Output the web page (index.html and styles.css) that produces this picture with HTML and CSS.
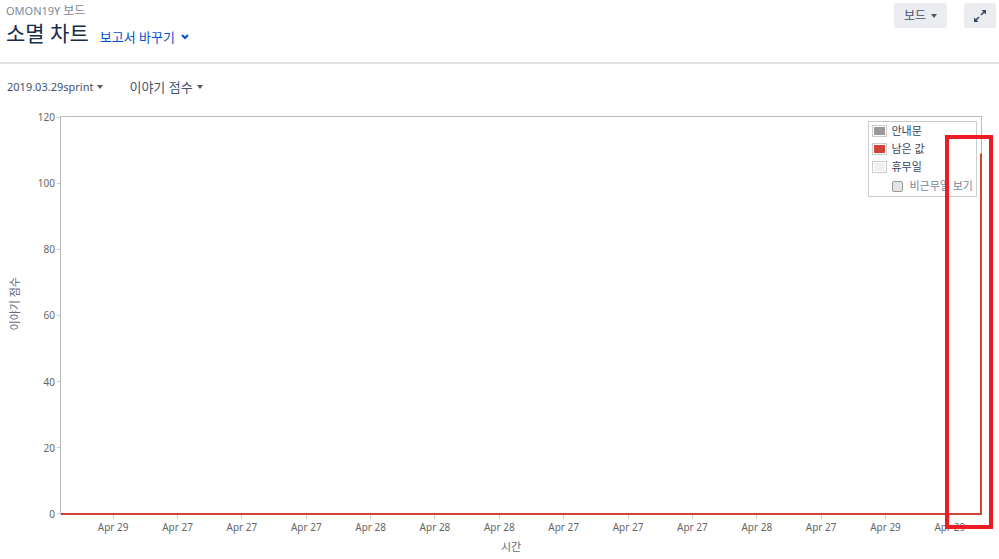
FILE: index.html
```html
<!DOCTYPE html>
<html lang="ko">

<head>
    <meta charset="UTF-8">
    <meta name="viewport" content="width=device-width, initial-scale=1.0">
    <title>소멸 차트</title>
    <link rel="stylesheet" href="styles.css">
</head>

<body>
    <header class="header">
        <div class="heading">
            <div class="boardName">OMON19Y <span class="korean">보드</span></div>
            <div class="titleRow">
                <h1>소멸 차트</h1>
                <a class="switchReport" href="#">보고서 바꾸기
                    <svg width="8" height="6" viewBox="0 0 8 6"><path d="M1 1l3 3 3-3" fill="none" stroke="currentColor" stroke-width="2"/></svg>
                </a>
            </div>
        </div>
        <div class="actions">
            <button type="button" class="btn boardBtn">보드 <span class="caret"></span></button>
            <button type="button" class="btn fullBtn" aria-label="전체 화면">
                <svg width="12" height="12" viewBox="0 0 12 12">
                    <path d="M7.500 0H12v4.500zM0 7.500V12h4.500z" fill="currentColor"/>
                    <path d="M7 5l3-3M5 7l-3 3" stroke="currentColor" stroke-width="1.500"/>
                </svg>
            </button>
        </div>
    </header>

    <main class="report">
        <div class="filters">
            <button type="button" class="filter">2019.03.29sprint <span class="caret"></span></button>
            <button type="button" class="filter scoreFilter">이야기 점수 <span class="caret"></span></button>
        </div>

        <div class="chart">
            <div class="yTitle">이야기 점수</div>
            <div class="yAxis">
                <span>120</span>
                <span>100</span>
                <span>80</span>
                <span>60</span>
                <span>40</span>
                <span>20</span>
                <span>0</span>
            </div>
            <div class="plot">
                <svg class="lines" viewBox="0 0 100 120" preserveAspectRatio="none">
                    <polyline points="0,120 100,120 100,11" vector-effect="non-scaling-stroke"/>
                </svg>
                <div class="legend">
                    <div class="legendItem"><span class="swatch guide"></span>안내문</div>
                    <div class="legendItem"><span class="swatch remaining"></span>남은 값</div>
                    <div class="legendItem"><span class="swatch holiday"></span>휴무일</div>
                    <div class="legendToggle">
                        <input type="checkbox" id="nonWorking">
                        <label for="nonWorking">비근무일 보기</label>
                    </div>
                </div>
                <div class="highlight"></div>
            </div>
            <div class="xAxis">
                <span>Apr 29</span>
                <span>Apr 27</span>
                <span>Apr 27</span>
                <span>Apr 27</span>
                <span>Apr 28</span>
                <span>Apr 28</span>
                <span>Apr 28</span>
                <span>Apr 27</span>
                <span>Apr 27</span>
                <span>Apr 27</span>
                <span>Apr 28</span>
                <span>Apr 27</span>
                <span>Apr 29</span>
                <span>Apr 29</span>
            </div>
            <div class="xTitle">시간</div>
        </div>
    </main>
</body>

</html>
```
FILE: styles.css
```css
* {
    box-sizing: border-box;
}

body {
    margin: 0;
    min-height: 100vh;
    display: flex;
    flex-direction: column;
    background-color: white;
    color: #42526e;
    font-family: "Noto Sans", "Noto Sans CJK KR", sans-serif;
    font-size: 11px;
    line-height: 16px;
}

button {
    font: inherit;
    color: inherit;
    border: none;
    cursor: pointer;
}

.korean {
    font-size: 12px;
}

.caret {
    border: 3px solid transparent;
    border-top: 4px solid #505860;
    border-bottom: none;
}

/* header */
.header {
    display: flex;
    justify-content: space-between;
    align-items: flex-start;
    height: 64px;
    padding: 3px 3px 0 6px;
    border-bottom: 2px solid #dfe3e8;
}

.boardName {
    height: 16px;
    color: #7a869a;
}

.titleRow {
    display: flex;
    align-items: center;
    gap: 11px;
}

h1 {
    margin: 0;
    color: #172b4d;
    font-size: 21px;
    font-weight: 400;
    line-height: 28px;
}

.switchReport {
    display: flex;
    align-items: center;
    gap: 6px;
    padding-top: 8px;
    color: #0052cc;
    font-size: 13px;
    text-decoration: none;
}

.actions {
    display: flex;
    gap: 17px;
}

.btn {
    display: flex;
    align-items: center;
    justify-content: center;
    gap: 5px;
    height: 25px;
    padding: 0 10px;
    border-radius: 3px;
    background-color: #ebecf0;
}

.boardBtn {
    font-size: 12px;
}

.fullBtn {
    color: #344563;
}

/* filters */
.report {
    flex: 1;
    display: flex;
    flex-direction: column;
    padding: 15px 17px 3px 7px;
}

.filters {
    display: flex;
    gap: 26px;
}

.filter {
    display: flex;
    align-items: center;
    gap: 4px;
    padding: 0;
    background: none;
}

.scoreFilter {
    font-size: 13px;
}

/* chart */
.chart {
    flex: 1;
    display: grid;
    grid-template-columns: 16px 37px 1fr;
    grid-template-rows: minmax(200px, 1fr) 25px 16px;
    margin-top: 21px;
    color: #666;
    font-size: 10px;
    line-height: 14px;
}

.yTitle {
    align-self: center;
    justify-self: center;
    margin-bottom: 24px;
    writing-mode: vertical-rl;
    text-orientation: sideways;
    transform: rotate(180deg);
    color: #5e6c84;
    font-size: 11px;
}

.yAxis {
    display: flex;
    flex-direction: column;
    justify-content: space-between;
    margin: -6px 0;
}

.yAxis span {
    display: flex;
    align-items: center;
    justify-content: flex-end;
    gap: 2px;
}

.yAxis span::after {
    content: "";
    width: 3px;
    height: 1px;
    background-color: #ccc;
}

.plot {
    position: relative;
    display: flex;
    justify-content: flex-end;
    align-items: flex-start;
    padding: 4px;
    border: 1px solid #bbb;
}

.lines {
    position: absolute;
    inset: 0;
    width: 100%;
    height: 100%;
    overflow: visible;
    fill: none;
    stroke: #d04437;
    stroke-width: 2px;
}

.legend {
    padding: 0 3px;
    border: 1px solid #ccc;
    color: #344563;
    font-size: 11px;
}

.legendItem {
    display: flex;
    align-items: center;
    gap: 4px;
    height: 18px;
}

.swatch {
    width: 15px;
    height: 12px;
    padding: 1px;
    border: 1px solid #ccc;
    background-clip: content-box;
}

.guide {
    background-color: #999;
}

.remaining {
    background-color: #d04437;
}

.holiday {
    background-color: #f0f0f0;
}

.legendToggle {
    display: flex;
    align-items: center;
    gap: 6px;
    height: 20px;
    padding-left: 20px;
    color: #7a869a;
}

.legendToggle input {
    appearance: none;
    width: 11px;
    height: 11px;
    margin: 0;
    border: 1px solid #999;
    border-radius: 2px;
    background-color: #e4e4e4;
}

.highlight {
    position: absolute;
    top: 18px;
    right: -12px;
    bottom: -15px;
    width: 48px;
    border: 4px solid #ed1c24;
}

.xAxis {
    grid-column: 3;
    display: flex;
    padding-left: 21px;
}

.xAxis span {
    flex: 1;
    text-align: center;
}

.xAxis span::before {
    content: "";
    display: block;
    width: 1px;
    height: 4px;
    margin: 0 auto 1px;
    background-color: #ccc;
}

.xTitle {
    grid-column: 3;
    margin-right: 20px;
    text-align: center;
    color: #5e6c84;
    font-size: 11px;
}
```
